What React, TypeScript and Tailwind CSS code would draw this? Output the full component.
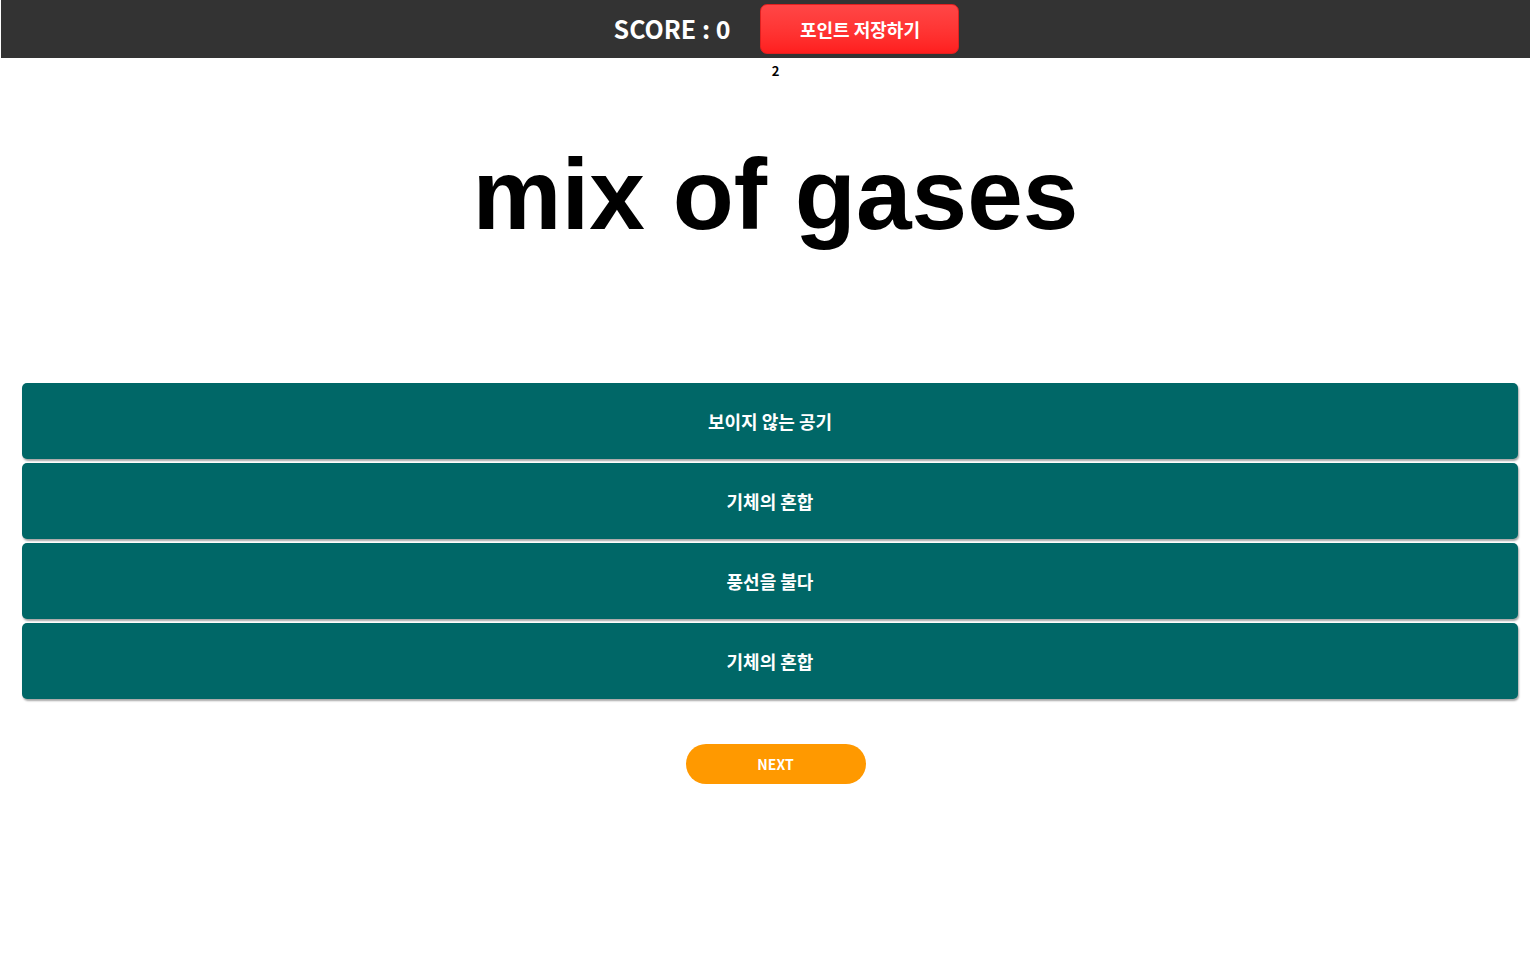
import React from 'react';

const answers = ['보이지 않는 공기', '기체의 혼합', '풍선을 불다', '기체의 혼합'];

const kr = "font-['Noto_Sans_CJK_KR','Noto_Sans',sans-serif]";

const App: React.FC = () => {
  return (
    <div className={`min-h-screen bg-white ${kr}`}>
      <header className="mx-px h-[58px] bg-[#333333] flex items-center justify-center gap-[30px] pl-[42px]">
        <span className="text-white text-[25px] font-bold leading-none -mt-[2px]">SCORE : 0</span>
        <button className="w-[199px] h-[50px] rounded-[7px] border border-[#e02020] bg-gradient-to-b from-[#ff4646] to-[#ff1e1e] text-white text-[18px] font-bold">
          포인트 저장하기
        </button>
      </header>

      <div className="pl-5 text-center">
        <p className="text-[13px] font-bold leading-[26px] text-black">2</p>
        <h1 className="mt-[53px] text-[100px] leading-[115px] font-bold text-black font-['Liberation_Sans',Arial,sans-serif]">
          mix of gases
        </h1>
      </div>

      <div className="mt-[131px] ml-[22px] mr-[13px] flex flex-col gap-1">
        {answers.map((a, i) => (
          <button
            key={i}
            className="h-[76px] w-full rounded-[5px] bg-[#006767] text-white text-[18px] font-bold shadow-[1px_2px_2px_rgba(0,0,0,0.35)]"
          >
            {a}
          </button>
        ))}
      </div>

      <div className="pl-5 mt-[45px] flex justify-center">
        <button className="w-[180px] h-[40px] rounded-full bg-[#ff9900] text-white text-[14px] font-bold">
          NEXT
        </button>
      </div>
    </div>
  );
};

export default App;
